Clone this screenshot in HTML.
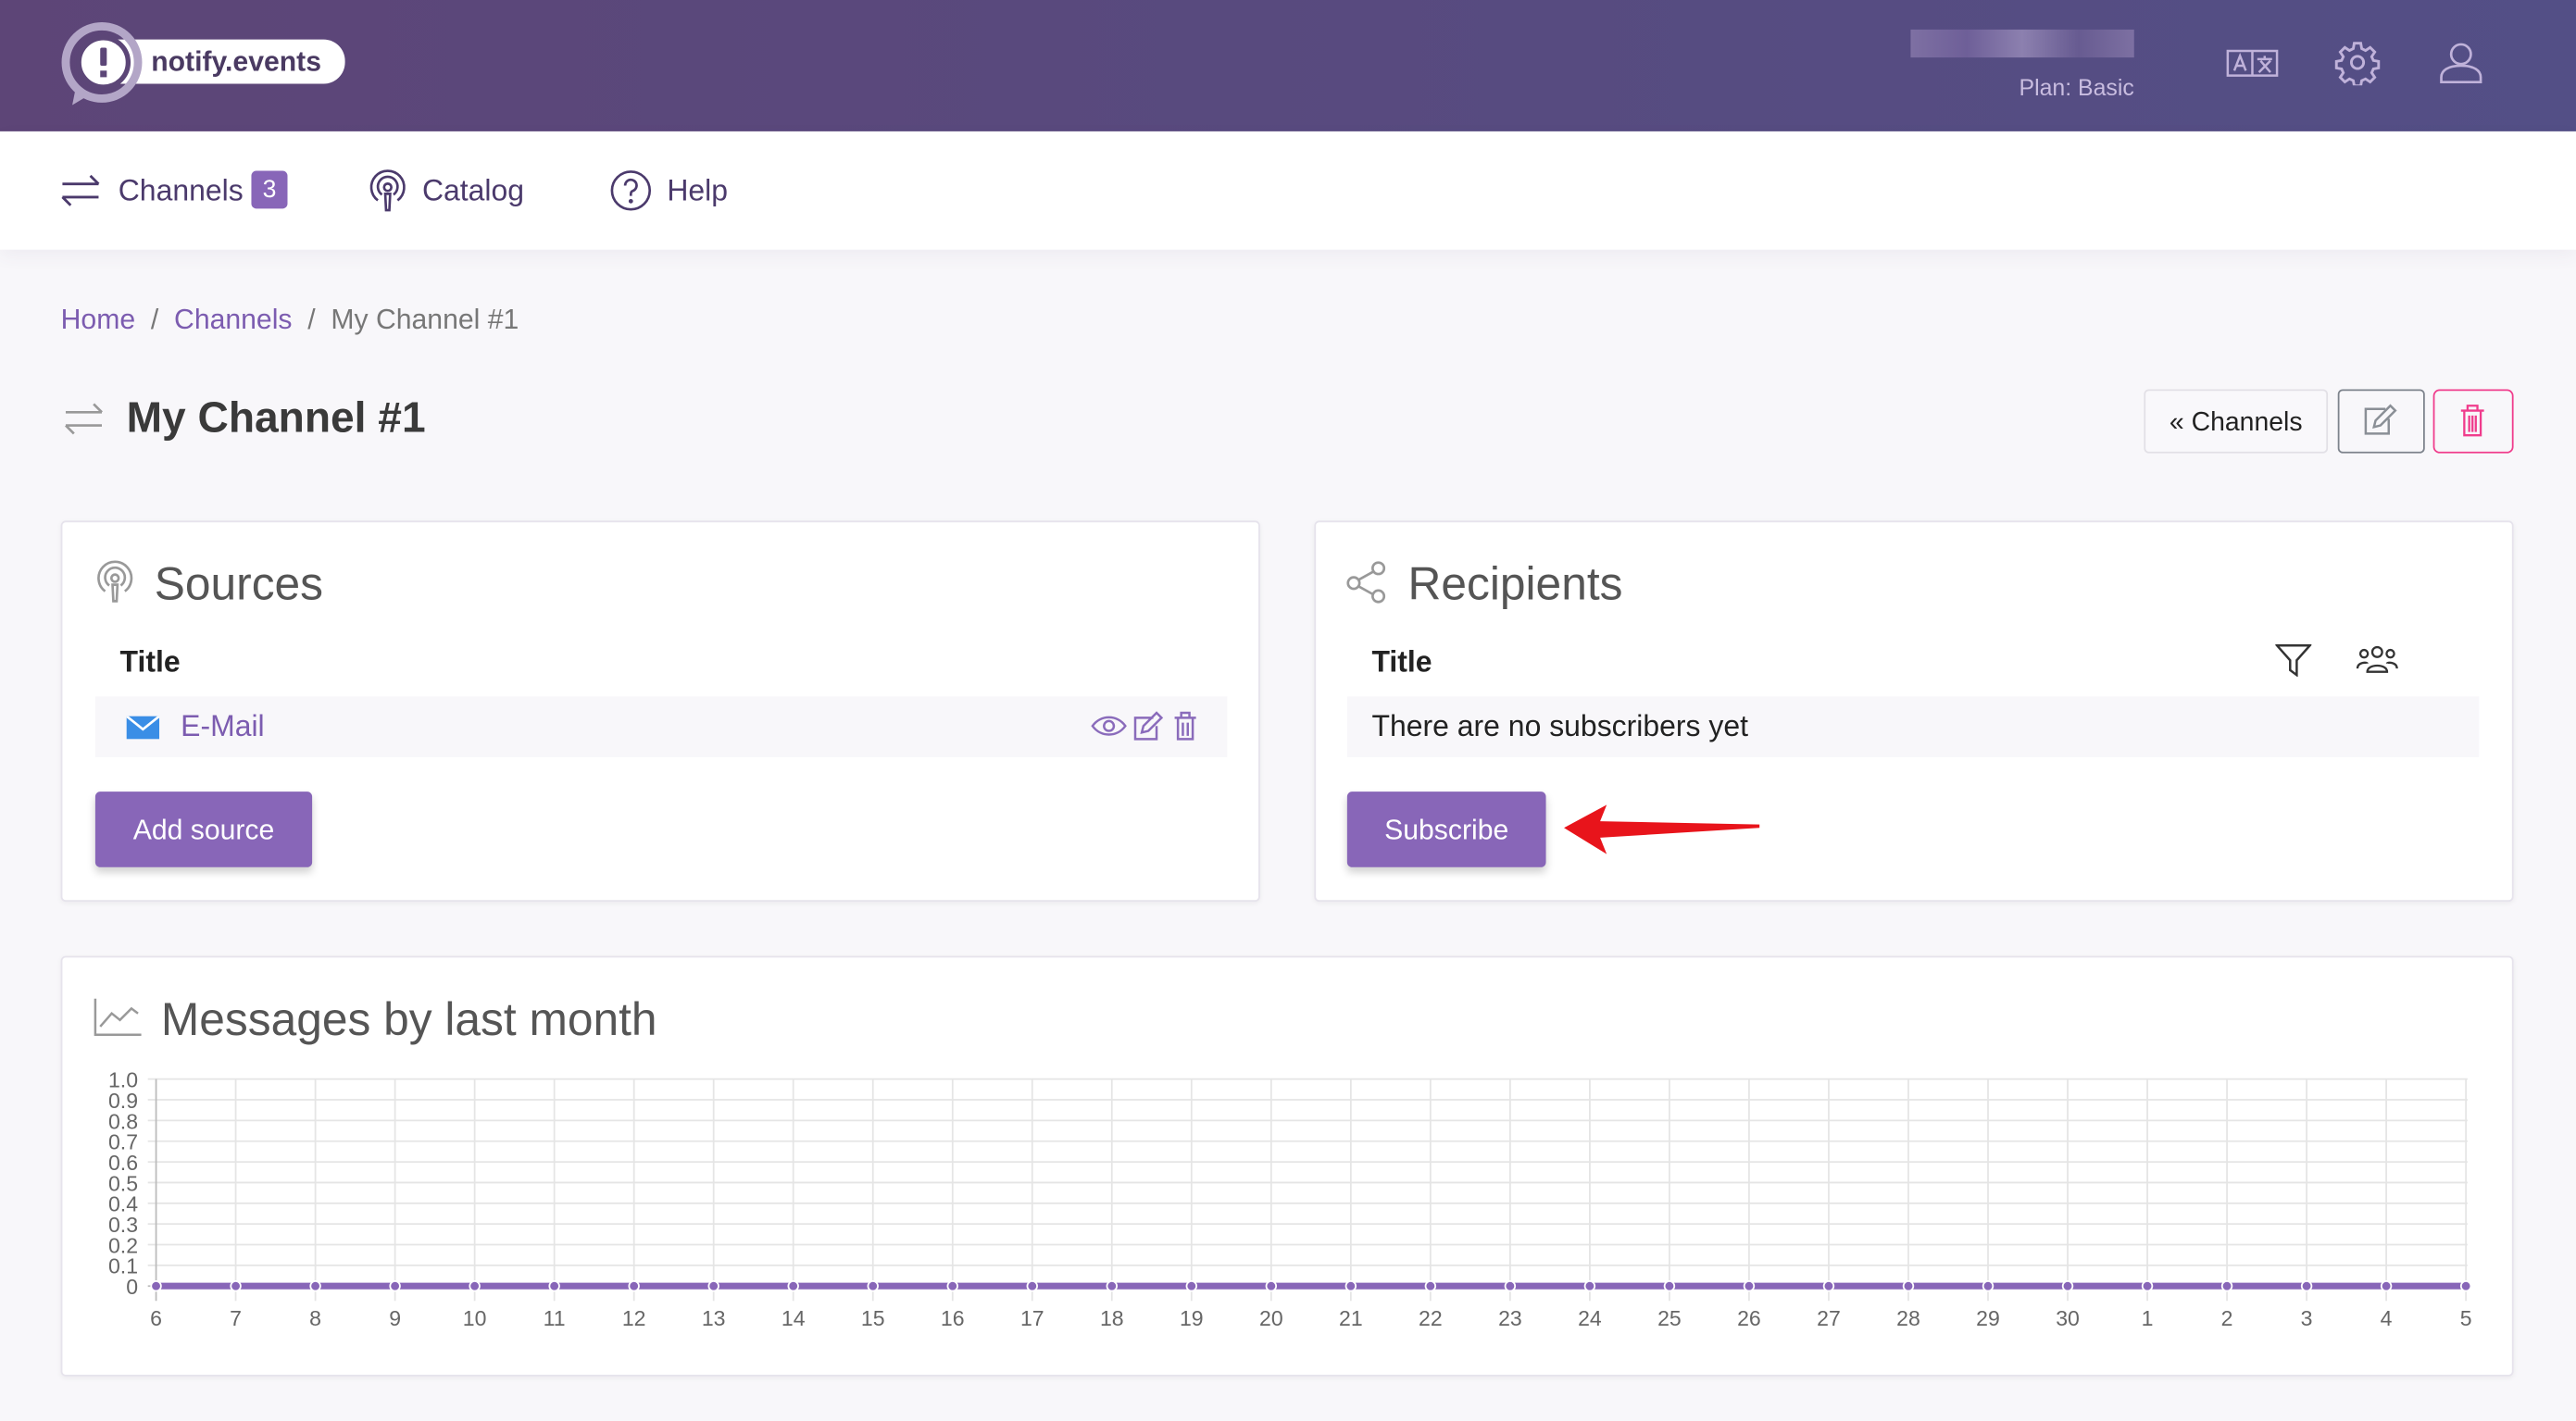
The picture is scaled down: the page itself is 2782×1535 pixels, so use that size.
<!DOCTYPE html>
<html><head><meta charset="utf-8"><style>
*{box-sizing:border-box;margin:0;padding:0}
html,body{width:2782px;height:1534px;overflow:hidden;background:#f8f7fa;font-family:"Liberation Sans",sans-serif}
#w{position:absolute;left:0;top:0;width:1568px;height:865px;transform:scale(1.77423);transform-origin:0 0;background:#f8f7fa}
.a{position:absolute}
.hdr{left:0;top:0;width:1568px;height:80px;background:linear-gradient(90deg,#5d4577,#534f86)}
.nav{left:0;top:80px;width:1568px;height:72px;background:#fff;box-shadow:0 4px 10px rgba(80,60,120,.06)}
.navt{font-size:18px;color:#4b3a6c;top:106px}
.card{background:#fff;border:1px solid #e6e3ec;border-radius:3px;box-shadow:0 1px 3px rgba(0,0,0,.05)}
.ct{font-size:28px;color:#555}
.th{font-size:18px;font-weight:bold;color:#222}
.row{background:#f8f7fa}
.btn{background:#8866b8;color:#fff;font-size:17px;border-radius:3px;text-align:center;line-height:48px;box-shadow:0 3px 5px rgba(0,0,0,.18)}
</style></head><body><div id="w">
<div class="a hdr"></div>
<svg class="a" style="left:36px;top:12px" width="180" height="54" viewBox="0 0 180 54">
<rect x="22" y="12" width="152" height="27" rx="13" fill="#fff"/>
<circle cx="26" cy="26" r="22" fill="none" stroke="#b3a6c7" stroke-width="5"/>
<path d="M10 42 L8 52 L18 46Z" fill="#b3a6c7"/>
<circle cx="27" cy="26" r="15" fill="#fff" stroke="#5c4677" stroke-width="3"/>
<rect x="25" y="17" width="4" height="11" rx="1" fill="#5c4677"/><rect x="25" y="31" width="4" height="4" fill="#5c4677"/>
<text x="56" y="31" font-family="Liberation Sans" font-weight="bold" font-size="17" fill="#4a3a62">notify.events</text>
</svg>
<div class="a" style="left:1163px;top:18px;width:136px;height:17px;background:linear-gradient(90deg,#7e70a3,#6e5f98,#8c80af,#675b91,#7d70a2)"></div>
<div class="a" style="left:1229px;top:45px;font-size:14px;color:#c9bde0">Plan: Basic</div>
<svg class="a" style="left:1355px;top:28px" width="34" height="22" viewBox="0 0 34 22" fill="none" stroke="#c0b2da" stroke-width="1.4"><rect x="1" y="3" width="30" height="15"/><line x1="16" y1="3" x2="16" y2="18"/><path d="M5 15 L8.5 6 L12 15 M6.5 12h4"/><path d="M19 8h9 M23.5 6v2 M20 16 L27 9 M21 9 L27 16"/></svg>
<svg class="a" style="left:1421px;top:24px" width="28" height="28" viewBox="0 0 24 24" fill="none" stroke="#c0b2da" stroke-width="1.4"><circle cx="12" cy="12" r="3.2"/><path d="M10.3 2h3.4l.5 2.8 2 1 2.4-1.6 2.4 2.4-1.6 2.4.9 2 2.7.5v3.4l-2.7.5-.9 2 1.6 2.4-2.4 2.4-2.4-1.6-2 .9-.5 2.7h-3.4l-.5-2.7-2-.9-2.4 1.6-2.4-2.4 1.6-2.4-.9-2-2.7-.5v-3.4l2.7-.5.9-2-1.6-2.4 2.4-2.4 2.4 1.6 2-1z"/></svg>
<svg class="a" style="left:1484px;top:24px" width="28" height="28" viewBox="0 0 28 28" fill="none" stroke="#c0b2da" stroke-width="1.5"><circle cx="14" cy="9" r="6"/><path d="M2 26v-3c0-4 4-7 12-7s12 3 12 7v3z"/></svg>

<div class="a nav"></div>
<svg class="a" style="left:36px;top:105px" width="26" height="22" viewBox="0 0 26 22" fill="none" stroke="#4b3a6c" stroke-width="1.6"><path d="M2 7h22 M19 2l5 5 M24 15H2 M7 20l-5-5"/></svg>
<div class="a navt" style="left:72px">Channels</div>
<div class="a" style="left:153px;top:104px;width:22px;height:23px;background:#8866b8;color:#fff;border-radius:3px;font-size:15px;text-align:center;line-height:23px">3</div>
<svg class="a" style="left:224px;top:103px" width="24" height="27" viewBox="0 0 24 27" fill="none" stroke="#4b3a6c" stroke-width="1.5"><path d="M6 19a10 10 0 1 1 12 0"/><path d="M8.5 15.5a6 6 0 1 1 7 0"/><circle cx="12" cy="11" r="2.2"/><path d="M10.5 15h3l-.5 10h-2z"/></svg>
<div class="a navt" style="left:257px">Catalog</div>
<svg class="a" style="left:371px;top:103px" width="26" height="26" viewBox="0 0 26 26" fill="none" stroke="#4b3a6c" stroke-width="1.5"><circle cx="13" cy="13" r="11.5"/><path d="M9.5 10a3.5 3.5 0 1 1 4.5 3.3c-.8.3-1 1-1 2v1"/><circle cx="13" cy="19.5" r=".6" fill="#4b3a6c"/></svg>
<div class="a navt" style="left:406px">Help</div>

<div class="a" style="left:37px;top:185px;font-size:17px;color:#777"><span style="color:#7c5cb0">Home</span>&nbsp;&nbsp;/&nbsp;&nbsp;<span style="color:#7c5cb0">Channels</span>&nbsp;&nbsp;/&nbsp;&nbsp;My Channel #1</div>
<svg class="a" style="left:36px;top:244px" width="30" height="22" viewBox="0 0 26 22" fill="none" stroke="#999" stroke-width="1.5"><path d="M2 7h22 M19 2l5 5 M24 15H2 M7 20l-5-5"/></svg>
<div class="a" style="left:77px;top:239px;font-size:26px;font-weight:bold;color:#3a3a3a">My Channel #1</div>
<div class="a" style="left:1305px;top:237px;width:112px;height:39px;border:1px solid #e2e0e6;border-radius:3px;background:#f9f8fb;font-size:16px;color:#222;text-align:center;line-height:39px">« Channels</div>
<div class="a" style="left:1423px;top:237px;width:53px;height:39px;border:1px solid #7d838c;border-radius:3px"></div>
<svg class="a" style="left:1438px;top:246px" width="22" height="20" viewBox="0 0 22 20" fill="none" stroke="#8a8f96" stroke-width="1.4"><path d="M14 3H2v15h14V9"/><path d="M7 14l1-4 9-9 3 3-9 9z"/></svg>
<div class="a" style="left:1481px;top:237px;width:49px;height:39px;border:1.5px solid #f03c8c;border-radius:4px"></div>
<svg class="a" style="left:1497px;top:246px" width="16" height="20" viewBox="0 0 16 20" fill="none" stroke="#f03c8c" stroke-width="1.3"><path d="M1 4h14 M5 4V1h6v3 M3 4v15h10V4 M6 7v10 M8 7v10 M10 7v10"/></svg>

<div class="a card" style="left:37px;top:317px;width:730px;height:232px"></div>
<svg class="a" style="left:58px;top:341px" width="24" height="27" viewBox="0 0 24 27" fill="none" stroke="#999" stroke-width="1.5"><path d="M6 19a10 10 0 1 1 12 0"/><path d="M8.5 15.5a6 6 0 1 1 7 0"/><circle cx="12" cy="11" r="2.2"/><path d="M10.5 15h3l-.5 10h-2z"/></svg>
<div class="a ct" style="left:94px;top:340px">Sources</div>
<div class="a th" style="left:73px;top:393px">Title</div>
<div class="a row" style="left:58px;top:424px;width:689px;height:37px"></div>
<svg class="a" style="left:77px;top:436px" width="20" height="14" viewBox="0 0 20 14"><rect width="20" height="14" fill="#3a8ee6"/><path d="M0 0l10 8 10-8" fill="none" stroke="#fff" stroke-width="1.5"/></svg>
<div class="a" style="left:110px;top:432px;font-size:18px;color:#7c5cb0">E-Mail</div>
<svg class="a" style="left:664px;top:433px" width="70" height="18" viewBox="0 0 70 18" fill="none" stroke="#8a6bbb" stroke-width="1.4"><path d="M1 9c5-7 15-7 20 0-5 7-15 7-20 0z"/><circle cx="11" cy="9" r="3"/><path d="M38 4H27v13h13V9 M31 13l1-4 8-8 3 3-8 8z"/><path d="M51 4h13 M55 4V1h5v3 M53 4v13h9V4 M56 7v8 M59 7v8"/></svg>
<div class="a btn" style="left:58px;top:482px;width:132px;height:46px">Add source</div>

<div class="a card" style="left:800px;top:317px;width:730px;height:232px"></div>
<svg class="a" style="left:819px;top:341px" width="26" height="27" viewBox="0 0 26 27" fill="none" stroke="#999" stroke-width="1.5"><circle cx="5" cy="14" r="3.5"/><circle cx="20" cy="5" r="3.5"/><circle cx="20" cy="22" r="3.5"/><path d="M8 12l9-5 M8 16l9 5"/></svg>
<div class="a ct" style="left:857px;top:340px">Recipients</div>
<div class="a th" style="left:835px;top:393px">Title</div>
<svg class="a" style="left:1385px;top:392px" width="22" height="20" viewBox="0 0 22 20" fill="none" stroke="#333" stroke-width="1.4"><path d="M1 1h20l-8 9v9l-4-3v-6z"/></svg>
<svg class="a" style="left:1434px;top:392px" width="26" height="18" viewBox="0 0 26 18" fill="none" stroke="#333" stroke-width="1.3"><circle cx="13" cy="5" r="3"/><circle cx="5" cy="6" r="2.3"/><circle cx="21" cy="6" r="2.3"/><path d="M7 17c0-5 12-5 12 0z M1 15c0-4 6-4 6-3 M25 15c0-4-6-4-6-3"/></svg>
<div class="a row" style="left:820px;top:424px;width:689px;height:37px"></div>
<div class="a" style="left:835px;top:432px;font-size:18px;color:#222">There are no subscribers yet</div>
<div class="a btn" style="left:820px;top:482px;width:121px;height:46px">Subscribe</div>
<svg class="a" style="left:948px;top:488px" width="126" height="34" viewBox="0 0 126 34"><path d="M4 16 L30 2 L26 12 L123 14 L123 16 L26 22 L30 32 Z" fill="#e8141b"/></svg>

<div class="a card" style="left:37px;top:582px;width:1493px;height:256px"></div>
<svg class="a" style="left:57px;top:607px" width="30" height="24" viewBox="0 0 30 24" fill="none" stroke="#999" stroke-width="1.4"><path d="M1 1v22h28 M4 18l7-8 5 4 7-7 4 3"/></svg>
<div class="a ct" style="left:98px;top:605px">Messages by last month</div>
<svg class="a" style="left:0;top:0" width="1568" height="865" viewBox="0 0 1568 865" font-family="Liberation Sans" font-size="13" fill="#666">
<g stroke="#e5e5e5" stroke-width="1">
<line x1="90" y1="657" x2="1502" y2="657"/><line x1="90" y1="669.6" x2="1502" y2="669.6"/><line x1="90" y1="682.2" x2="1502" y2="682.2"/><line x1="90" y1="694.8" x2="1502" y2="694.8"/><line x1="90" y1="707.4" x2="1502" y2="707.4"/><line x1="90" y1="720" x2="1502" y2="720"/><line x1="90" y1="732.6" x2="1502" y2="732.6"/><line x1="90" y1="745.2" x2="1502" y2="745.2"/><line x1="90" y1="757.8" x2="1502" y2="757.8"/><line x1="90" y1="770.4" x2="1502" y2="770.4"/>
</g>
<g id="vg" stroke="#e5e5e5"></g>
<line x1="95" y1="657" x2="95" y2="792" stroke="#bbb"/>
<line x1="90" y1="783" x2="1502" y2="783" stroke="#bbb"/>
<g text-anchor="end"><text x="84" y="662">1.0</text><text x="84" y="674.6">0.9</text><text x="84" y="687.2">0.8</text><text x="84" y="699.8">0.7</text><text x="84" y="712.4">0.6</text><text x="84" y="725">0.5</text><text x="84" y="737.6">0.4</text><text x="84" y="750.2">0.3</text><text x="84" y="762.8">0.2</text><text x="84" y="775.4">0.1</text><text x="84" y="788">0</text></g>
<line x1="95" y1="783" x2="1501" y2="783" stroke="#8866b8" stroke-width="4"/>
<g id="pts"></g>
</svg>
<script>
var labs=[6,7,8,9,10,11,12,13,14,15,16,17,18,19,20,21,22,23,24,25,26,27,28,29,30,1,2,3,4,5];
var s='',p='';
labs.forEach(function(l,i){var x=95+i*(1406/29);
if(i>0)s+='<line x1="'+x+'" y1="657" x2="'+x+'" y2="792"/>';
p+='<circle cx="'+x+'" cy="783" r="3" fill="#8866b8" stroke="#fff" stroke-width="1"/><text x="'+x+'" y="807" text-anchor="middle">'+l+'</text>';});
document.getElementById('vg').innerHTML=s;document.getElementById('pts').innerHTML=p;
</script>
</div></body></html>
